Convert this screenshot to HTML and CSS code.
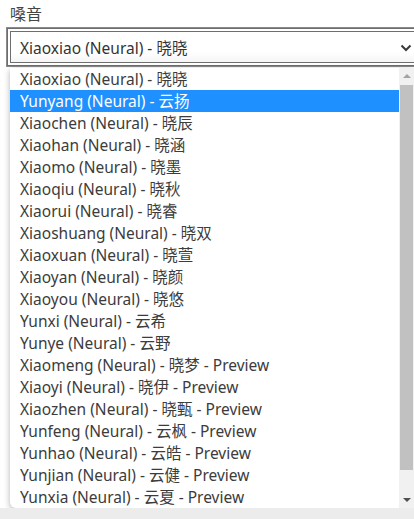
FILE: index.html
```html
<!DOCTYPE html>
<html lang="zh">
<head>
<meta charset="utf-8">
<link rel="stylesheet" href="styles.css">
</head>
<body>
<div class="page">
  <div class="field">
    <label class="label">嗓音</label>
    <div class="select">
      <span class="select-text">Xiaoxiao (Neural) - 晓晓</span>
      <svg class="chev" width="12" height="8" viewBox="0 0 12 8"><path d="M1.5 1.5 L6 6 L10.5 1.5" fill="none" stroke="#3a3a3a" stroke-width="2"/></svg>
    </div>
  </div>
  <div class="popup">
    <ul class="list">
      <li>Xiaoxiao (Neural) - 晓晓</li>
      <li class="sel">Yunyang (Neural) - 云扬</li>
      <li>Xiaochen (Neural) - 晓辰</li>
      <li>Xiaohan (Neural) - 晓涵</li>
      <li>Xiaomo (Neural) - 晓墨</li>
      <li>Xiaoqiu (Neural) - 晓秋</li>
      <li>Xiaorui (Neural) - 晓睿</li>
      <li>Xiaoshuang (Neural) - 晓双</li>
      <li>Xiaoxuan (Neural) - 晓萱</li>
      <li>Xiaoyan (Neural) - 晓颜</li>
      <li>Xiaoyou (Neural) - 晓悠</li>
      <li>Yunxi (Neural) - 云希</li>
      <li>Yunye (Neural) - 云野</li>
      <li>Xiaomeng (Neural) - 晓梦 - Preview</li>
      <li>Xiaoyi (Neural) - 晓伊 - Preview</li>
      <li>Xiaozhen (Neural) - 晓甄 - Preview</li>
      <li>Yunfeng (Neural) - 云枫 - Preview</li>
      <li>Yunhao (Neural) - 云皓 - Preview</li>
      <li>Yunjian (Neural) - 云健 - Preview</li>
      <li>Yunxia (Neural) - 云夏 - Preview</li>
    </ul>
    <div class="scrollbar">
      <div class="arrow up"></div>
      <div class="track"><div class="thumb"></div></div>
      <div class="arrow down"></div>
    </div>
  </div>
</div>
</body>
</html>
```
FILE: styles.css
```css
html, body {
  margin: 0;
  padding: 0;
}
body {
  width: 414px;
  height: 519px;
  overflow: hidden;
  background: #ececec;
  font-family: "Noto Sans", "Noto Sans CJK SC", sans-serif;
  color: #333;
}
.page {
  position: relative;
  height: 508px;
  background: #fff;
  overflow: hidden;
}
.field {
  padding: 3px 0 0 10px;
}
.label {
  display: block;
  font-size: 16px;
  line-height: 22px;
  height: 25px;
  color: #444;
}
.select {
  box-sizing: border-box;
  margin-left: -3px;
  width: 412px;
  height: 38px;
  border: 1px solid #6e6e6e;
  outline: 1px solid #8a8a8a;
  box-shadow: inset 0 0 0 2px #fff, inset 0 0 0 3px #6e6e6e;
  background: linear-gradient(#fff 65%, #f2f2f2);
  display: flex;
  align-items: center;
  padding-left: 12px;
  padding-right: 6px;
}
.select-text {
  flex: 1;
  font-size: 15.5px;
  color: #333;
}
.chev {
  display: block;
  flex: none;
  margin-top: 1px;
}
.popup {
  position: absolute;
  left: 10px;
  top: 68px;
  width: 404px;
  height: 440px;
  background: #fff;
  border-radius: 0 0 0 6px;
  box-shadow: 0 2px 6px rgba(0,0,0,0.3);
  display: flex;
  overflow: hidden;
}
.list {
  list-style: none;
  margin: 0;
  padding: 0;
  flex: 1;
}
.list li {
  height: 22px;
  line-height: 22px;
  padding-left: 10px;
  font-size: 15.5px;
  color: #3c3c3c;
  white-space: nowrap;
}
.list li.sel {
  background: #1e90ff;
  color: #fff;
}
.scrollbar {
  width: 15px;
  background: #f1f1f1;
  display: flex;
  flex-direction: column;
}
.arrow {
  height: 17px;
  position: relative;
}
.arrow::after {
  content: "";
  position: absolute;
  left: 4px;
  width: 0;
  height: 0;
  border-left: 4px solid transparent;
  border-right: 4px solid transparent;
}
.arrow.up::after {
  top: 6px;
  border-bottom: 4px solid #a3a3a3;
}
.arrow.down::after {
  top: 7px;
  border-top: 4px solid #505050;
}
.track {
  flex: 1;
  padding: 0 1px;
  display: flex;
  flex-direction: column;
}
.thumb {
  height: 385px;
  background: #c1c1c1;
}
```
